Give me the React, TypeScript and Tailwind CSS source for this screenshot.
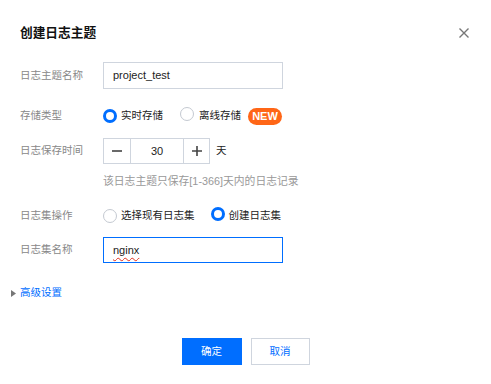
import React from "react";

const Radio = ({ checked }: { checked?: boolean }) =>
  checked ? (
    <span className="inline-block w-[14px] h-[14px] rounded-full border-[3.5px] border-[#006eff] bg-white shrink-0" />
  ) : (
    <span className="inline-block w-[14px] h-[14px] rounded-full border border-[#c4c9d1] bg-white shrink-0" />
  );

const Label = ({ children }: { children: React.ReactNode }) => (
  <div className="w-[83px] shrink-0 text-[10.5px] text-[#888888]">{children}</div>
);

export default function App() {
  return (
    <div
      className="w-[491px] h-[384px] bg-white relative overflow-hidden"
      style={{ fontFamily: '"Liberation Sans", Arial, "Noto Sans CJK SC", sans-serif' }}
    >
      <button className="absolute left-[459px] top-[28px] w-[10px] h-[10px]">
        <svg width="10" height="10" viewBox="0 0 10 10">
          <path d="M0.5 0.5 L9.5 9.5 M9.5 0.5 L0.5 9.5" stroke="#777" strokeWidth="1.4" />
        </svg>
      </button>

      <div className="pl-[20px] pt-[24px]">
        <div className="h-[18px] leading-[18px] text-[12.7px] font-bold text-[#111]">创建日志主题</div>

        {/* row 1 */}
        <div className="mt-[20px] flex items-center h-[27px]">
          <Label>日志主题名称</Label>
          <div className="w-[180px] h-[27px] border border-[#cfd5de] flex items-center pl-[9px] text-[11px] text-[#222]">
            project_test
          </div>
        </div>

        {/* row 2 */}
        <div className="mt-[17px] flex items-center h-[20px]">
          <Label>存储类型</Label>
          <div className="flex items-center text-[10.5px] text-[#222]">
            <Radio checked />
            <span className="ml-[4px]">实时存储</span>
            <span className="ml-[17px]">
              <Radio />
            </span>
            <span className="ml-[5px]">离线存储</span>
            <span className="ml-[7px] w-[34px] h-[17px] rounded-full bg-[#ff6617] text-white font-bold text-[11px] flex items-center justify-center">
              NEW
            </span>
          </div>
        </div>

        {/* row 3 */}
        <div className="mt-[12px] flex items-center h-[26px]">
          <Label>日志保存时间</Label>
          <div className="flex h-[26px] border border-[#cfd5de]">
            <div className="w-[27px] flex items-center justify-center border-r border-[#cfd5de]">
              <svg width="10" height="10" viewBox="0 0 10 10">
                <path d="M0 5 H10" stroke="#444" strokeWidth="1.6" />
              </svg>
            </div>
            <div className="w-[52px] flex items-center justify-center text-[11px] text-[#222]">30</div>
            <div className="w-[26px] flex items-center justify-center border-l border-[#cfd5de]">
              <svg width="10" height="10" viewBox="0 0 10 10">
                <path d="M0 5 H10 M5 0 V10" stroke="#444" strokeWidth="1.6" />
              </svg>
            </div>
          </div>
          <span className="ml-[6px] text-[10.5px] text-[#222]">天</span>
        </div>

        {/* hint */}
        <div className="mt-[9px] h-[16px] leading-[16px] pl-[83px] text-[10.8px] text-[#999999]">
          该日志主题只保存[1-366]天内的日志记录
        </div>

        {/* row 4 */}
        <div className="mt-[17px] flex items-center h-[20px]">
          <Label>日志集操作</Label>
          <div className="flex items-center text-[10.5px] text-[#222]">
            <Radio />
            <span className="ml-[4px]">选择现有日志集</span>
            <span className="ml-[16px]">
              <Radio checked />
            </span>
            <span className="ml-[4px]">创建日志集</span>
          </div>
        </div>

        {/* row 5 */}
        <div className="mt-[11px] flex items-center h-[26px]">
          <Label>日志集名称</Label>
          <div className="w-[180px] h-[26px] border border-[#006eff] flex items-center pl-[9px] text-[11px] text-[#222]">
            <span className="underline decoration-wavy decoration-[#e0301e] underline-offset-[3px] decoration-1">nginx</span>
          </div>
        </div>

        {/* advanced */}
        <div className="mt-[22px] h-[16px] flex items-center -ml-[9px]">
          <svg width="5" height="7" viewBox="0 0 5 7">
            <path d="M0 0 L5 3.5 L0 7 Z" fill="#777" />
          </svg>
          <span className="ml-[4px] text-[10.5px] text-[#006eff]">高级设置</span>
        </div>
      </div>

      {/* buttons */}
      <div className="mt-[37px] flex justify-center gap-[9px]">
        <button className="w-[60px] h-[27px] bg-[#006eff] text-white text-[10.5px]">确定</button>
        <button className="w-[59px] h-[27px] border border-[#cfd5de] text-[#006eff] text-[10.5px] bg-white">取消</button>
      </div>
    </div>
  );
}
